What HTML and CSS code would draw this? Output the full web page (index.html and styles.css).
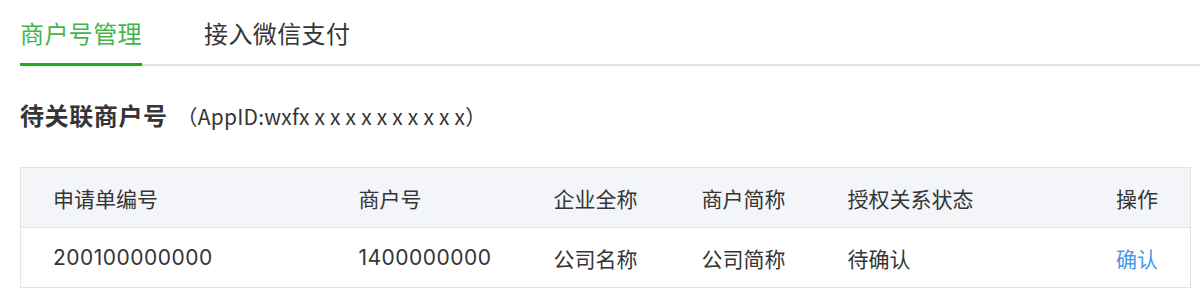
FILE: index.html
```html
<!DOCTYPE html>
<html lang="zh-CN">
<head>
<meta charset="utf-8">
<title>商户号管理</title>
<link rel="stylesheet" href="styles.css">
</head>
<body>
<div class="page">
  <nav class="tabs">
    <a class="tab active">商户号管理</a>
    <a class="tab">接入微信支付</a>
  </nav>
  <h2 class="title">待关联商户号<span class="appid">（AppID:wxfx x x x x x x x x x x）</span></h2>
  <table class="list">
    <colgroup>
      <col class="c1"><col class="c2"><col class="c3"><col class="c4"><col class="c5"><col class="c6">
    </colgroup>
    <thead>
      <tr>
        <th>申请单编号</th>
        <th>商户号</th>
        <th>企业全称</th>
        <th>商户简称</th>
        <th>授权关系状态</th>
        <th class="op">操作</th>
      </tr>
    </thead>
    <tbody>
      <tr>
        <td class="num">200100000000</td>
        <td class="num">1400000000</td>
        <td>公司名称</td>
        <td>公司简称</td>
        <td>待确认</td>
        <td class="op"><a class="link">确认</a></td>
      </tr>
    </tbody>
  </table>
</div>
</body>
</html>
```

FILE: styles.css
```css
html, body {
  margin: 0;
  padding: 0;
  background: #ffffff;
}
body {
  font-family: "Noto Sans CJK SC", sans-serif;
  color: #353535;
}
.page {
  padding: 0 10px 0 20px;
}
.tabs {
  display: flex;
  gap: 62px;
  margin-right: -10px;
  padding-top: 15px;
  border-bottom: 2px solid #e2e2e2;
}
.tab {
  font-family: "Noto Sans CJK SC", sans-serif;
  font-size: 24px;
  line-height: 36px;
  letter-spacing: 0.4px;
  color: #353535;
  padding-bottom: 12px;
  border-bottom: 3px solid transparent;
  margin-bottom: -2px;
  cursor: pointer;
}
.tab.active {
  color: #44b549;
  border-bottom-color: #1aad19;
}
.title {
  display: flex;
  align-items: center;
  height: 36px;
  margin: 31px 0 34px;
  font-family: "Noto Sans CJK SC", sans-serif;
  font-size: 24px;
  line-height: 36px;
  font-weight: 700;
  letter-spacing: 0.6px;
  color: #353535;
}
.appid {
  margin-left: 9px;
  padding-top: 2px;
  font-family: "Noto Sans CJK SC", sans-serif;
  font-size: 21px;
  line-height: 1;
  font-weight: 400;
  letter-spacing: 0.2px;
}
.list {
  width: 100%;
  table-layout: fixed;
  border-collapse: collapse;
  border: 1px solid #e4e4e4;
  font-size: 21px;
}
.c1 { width: 306px; }
.c2 { width: 195px; }
.c3 { width: 148px; }
.c4 { width: 146px; }
.c5 { width: 235px; }
.c6 { width: 140px; }
.list th,
.list td {
  height: 59px;
  padding: 0 0 0 32px;
  text-align: left;
  vertical-align: middle;
  font-family: "Noto Sans CJK SC", sans-serif;
  line-height: 30px;
  white-space: nowrap;
}
.list th {
  font-weight: 400;
  background: #f4f5f9;
  border-bottom: 1px solid #e4e4e4;
}
.list td.num {
  font-family: "Inter", sans-serif;
  letter-spacing: 0.5px;
}
.list .op {
  text-align: right;
  padding: 0 32px 0 0;
}
.link {
  color: #459ae9;
  cursor: pointer;
}
```
